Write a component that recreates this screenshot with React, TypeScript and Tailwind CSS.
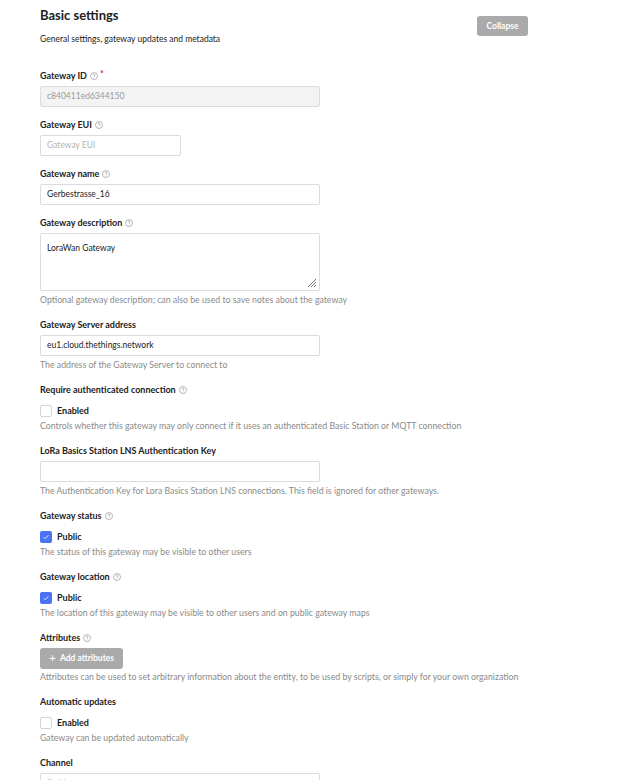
import React from 'react';

const font = { fontFamily: 'Lato, "Noto Sans", sans-serif' };

function Help() {
  return (
    <svg width="8" height="8" viewBox="0 0 16 16" className="ml-[3px] inline-block text-[#9a9a9a]">
      <circle cx="8" cy="8" r="7" fill="none" stroke="currentColor" strokeWidth="1.4" />
      <path d="M6 6.2a2 2 0 1 1 2.6 1.9c-.5.2-.6.6-.6 1.1v.6" fill="none" stroke="currentColor" strokeWidth="1.4" />
      <circle cx="8" cy="11.8" r="0.9" fill="currentColor" />
    </svg>
  );
}

function Label({ text, help, required, check }: { text: string; help?: boolean; required?: boolean; check?: boolean }) {
  return (
    <div className={`flex items-center h-3 text-[9px] font-bold text-[#222] ${check ? 'mb-[9px]' : 'mb-1'}`}>
      {text}
      {help && <Help />}
      {required && <span className="ml-[2px] -mt-[5px] text-[9px] text-[#e0263a]">*</span>}
    </div>
  );
}

function Desc({ children, tight }: { children: React.ReactNode; tight?: boolean }) {
  return (
    <div className={`${tight ? 'mt-[2px]' : 'mt-[3px]'} h-[13px] leading-3 whitespace-nowrap text-[8.75px] text-[#8a8a8a]`}>
      {children}
    </div>
  );
}

function Input({ value, placeholder, width = 'w-[280px]', disabled }: { value?: string; placeholder?: string; width?: string; disabled?: boolean }) {
  return (
    <div
      className={`${width} h-[21px] rounded-[2px] border border-[#dcdcdc] px-[6px] flex items-center text-[8.5px] ${
        disabled ? 'bg-[#f3f3f3] text-[#9a9a9a]' : 'bg-white text-[#222]'
      }`}
    >
      {value ? value : <span className="text-[#b4b4b4]">{placeholder}</span>}
    </div>
  );
}

function Checkbox({ label, checked }: { label: string; checked?: boolean }) {
  return (
    <div className="flex items-center h-3">
      {checked ? (
        <div className="w-3 h-3 rounded-[2px] bg-[#4a72f5] flex items-center justify-center">
          <svg width="8" height="8" viewBox="0 0 10 10">
            <path d="M2 5.2l2 2 4-4.4" fill="none" stroke="#dfe6ff" strokeWidth="1.2" />
          </svg>
        </div>
      ) : (
        <div className="w-3 h-3 rounded-[2px] border border-[#d4d4d4] bg-white" />
      )}
      <span className="ml-[5px] text-[9px] font-bold text-[#222]">{label}</span>
    </div>
  );
}

export default function App() {
  return (
    <div className="w-[619px] h-[780px] overflow-hidden bg-white" style={font}>
      <div className="pl-10 pr-[91px] pt-[6px]">
        {/* Header */}
        <div className="flex justify-between">
          <div>
            <h1 className="text-[13px] leading-[18px] font-bold text-[#222]">Basic settings</h1>
            <p className="mt-[9px] text-[8.5px] leading-3 text-[#222]">General settings, gateway updates and metadata</p>
          </div>
          <button className="mt-[10px] h-5 w-[51px] rounded-[3px] bg-[#aaaaaa] text-[8.5px] font-bold text-white">
            Collapse
          </button>
        </div>

        <div className="mt-[25px] flex flex-col gap-3">
          <div>
            <Label text="Gateway ID" help required />
            <Input value="c840411ed6344150" disabled />
          </div>
          <div>
            <Label text="Gateway EUI" help />
            <Input placeholder="Gateway EUI" width="w-[141px]" />
          </div>
          <div>
            <Label text="Gateway name" help />
            <Input value="Gerbestrasse_16" />
          </div>
          <div>
            <Label text="Gateway description" help />
            <div className="relative w-[280px] h-[58px] rounded-[2px] border border-[#dcdcdc] px-[6px] pt-[8px] text-[8.5px] text-[#222]">
              LoraWan Gateway
              <svg width="10" height="10" viewBox="0 0 10 10" className="absolute right-[2px] bottom-[2px]">
                <path d="M9 1L1 9M9 4L4 9M9 7L7 9" stroke="#777" strokeWidth="1" />
              </svg>
            </div>
            <Desc>Optional gateway description; can also be used to save notes about the gateway</Desc>
          </div>
          <div>
            <Label text="Gateway Server address" />
            <Input value="eu1.cloud.thethings.network" />
            <Desc>The address of the Gateway Server to connect to</Desc>
          </div>
          <div>
            <Label text="Require authenticated connection" help check />
            <Checkbox label="Enabled" />
            <Desc>Controls whether this gateway may only connect if it uses an authenticated Basic Station or MQTT connection</Desc>
          </div>
          <div>
            <Label text="LoRa Basics Station LNS Authentication Key" />
            <Input />
            <Desc>The Authentication Key for Lora Basics Station LNS connections. This field is ignored for other gateways.</Desc>
          </div>
          <div>
            <Label text="Gateway status" help check />
            <Checkbox label="Public" checked />
            <Desc>The status of this gateway may be visible to other users</Desc>
          </div>
          <div>
            <Label text="Gateway location" help check />
            <Checkbox label="Public" checked />
            <Desc>The location of this gateway may be visible to other users and on public gateway maps</Desc>
          </div>
          <div>
            <Label text="Attributes" help />
            <button className="h-[21px] w-[83px] rounded-[3px] bg-[#aaaaaa] text-[8.5px] font-bold text-white flex items-center justify-center gap-[4px]">
              <span className="text-[12px] font-normal leading-none -mt-[1px]">+</span> Add attributes
            </button>
            <Desc tight>Attributes can be used to set arbitrary information about the entity, to be used by scripts, or simply for your own organization</Desc>
          </div>
          <div>
            <Label text="Automatic updates" check />
            <Checkbox label="Enabled" />
            <Desc>Gateway can be updated automatically</Desc>
          </div>
          <div>
            <Label text="Channel" />
            <Input placeholder="Stable" />
          </div>
        </div>
      </div>
    </div>
  );
}
